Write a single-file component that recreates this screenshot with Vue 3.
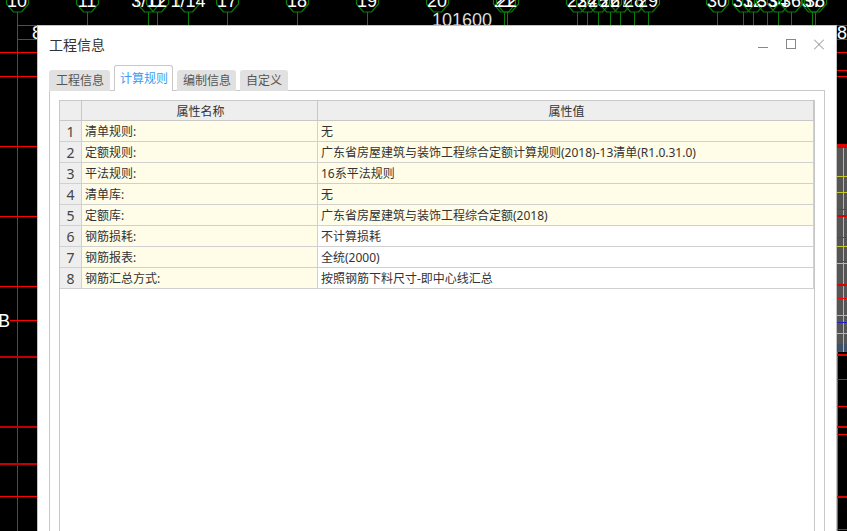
<script setup>
import { ref } from 'vue'

const activeTab = ref('计算规则')
const tabs = ['工程信息', '计算规则', '编制信息', '自定义']

const rows = [
  { name: '清单规则:', value: '无', tinted: true },
  { name: '定额规则:', value: '广东省房屋建筑与装饰工程综合定额计算规则(2018)-13清单(R1.0.31.0)', tinted: true },
  { name: '平法规则:', value: '16系平法规则', tinted: true },
  { name: '清单库:', value: '无', tinted: true },
  { name: '定额库:', value: '广东省房屋建筑与装饰工程综合定额(2018)', tinted: true },
  { name: '钢筋损耗:', value: '不计算损耗', tinted: false },
  { name: '钢筋报表:', value: '全统(2000)', tinted: false },
  { name: '钢筋汇总方式:', value: '按照钢筋下料尺寸-即中心线汇总', tinted: false }
]

// axis bubbles along the top of the drawing
const axes = [
  { x: 17, label: '10' }, { x: 87, label: '11' },
  { x: 148, label: '3/11' }, { x: 157, label: '12' }, { x: 188, label: '1/14' },
  { x: 227, label: '17' }, { x: 297, label: '18' }, { x: 367, label: '19' }, { x: 437, label: '20' },
  { x: 504, label: '21' }, { x: 507, label: '22' },
  { x: 577, label: '23' }, { x: 587, label: '24' }, { x: 598, label: '25' }, { x: 610, label: '26' },
  { x: 620, label: '27' }, { x: 634, label: '28' }, { x: 648, label: '29' },
  { x: 717, label: '30' }, { x: 743, label: '31' }, { x: 753, label: '32' }, { x: 767, label: '33' },
  { x: 778, label: '34' }, { x: 791, label: '36' }, { x: 812, label: '37' }, { x: 815, label: '38' }
]

const bubble = (x) => {
  const c = x + 0.5
  return `${c - 11},-4 ${c - 11},4 ${c - 4},12 ${c + 4},12 ${c + 11},4 ${c + 11},-4`
}

const leftReds = [52, 76, 146, 216, 286, 320, 496]
const leftThick = [357, 427, 464]
const rightReds = [52, 70, 76, 209, 237, 261, 298, 379, 406, 434, 529]
const rightThick = [216, 285, 355, 427, 497]
const rightYellow = [176, 192, 246, 263, 315, 333]
</script>

<template>
  <div class="screen">
    <svg class="drawing" width="847" height="531" viewBox="0 0 847 531">
      <rect x="837" y="145" width="10" height="207" fill="#555" />
      <rect x="837" y="344" width="10" height="7" fill="#3d5068" />
      <g v-for="a in axes" :key="a.x">
        <polygon :points="bubble(a.x)" fill="none" stroke="#0a7d0a" stroke-width="1.2" />
        <line class="crisp" :x1="a.x + 0.5" y1="12" :x2="a.x + 0.5" y2="25" stroke="#0a7d0a" />
        <text :x="a.x" y="7" text-anchor="middle" class="axis-label">{{ a.label }}</text>
      </g>
      <text x="462" y="26" text-anchor="middle" class="dim-label">101600</text>

      <path class="crisp" d="M17.5 12V52M17 25.5H37M17 39.5H37" stroke="#0a7d0a" fill="none" />
      <text x="32" y="39" class="axis-label">8</text>
      <line class="crisp" x1="17.5" y1="52" x2="17.5" y2="531" stroke="#ff0000" />
      <line v-for="y in leftReds" :key="y" class="crisp" x1="0" :y1="y + 0.5" x2="37" :y2="y + 0.5" stroke="#ff0000" />
      <line v-for="y in leftThick" :key="'lt' + y" class="crisp" x1="0" :y1="y" x2="37" :y2="y" stroke="#c00000" stroke-width="2" />
      <circle cx="-5" cy="321" r="7" fill="none" stroke="#0a7d0a" stroke-width="1.4" />
      <rect x="2" y="314" width="8" height="14" fill="#000" />
      <text x="-2" y="327" class="axis-label">B</text>

      <path class="crisp" d="M837 25.5H847M837 39.5H847" stroke="#0a7d0a" fill="none" />
      <text x="837" y="39" class="axis-label">85</text>
      <line class="crisp" x1="843.5" y1="145" x2="843.5" y2="352" stroke="#8fd08f" />
      <line class="crisp" x1="837.5" y1="352" x2="837.5" y2="531" stroke="#3f8f3f" />
      <line class="crisp" x1="837" y1="144.5" x2="847" y2="144.5" stroke="#2020d0" />
      <line class="crisp" x1="837" y1="322.5" x2="847" y2="322.5" stroke="#2020d0" />
      <line v-for="y in rightYellow" :key="'y' + y" class="crisp" x1="837" :y1="y + 0.5" x2="847" :y2="y + 0.5" stroke="#c8c820" />
      <line v-for="y in rightReds" :key="'r' + y" class="crisp" x1="837" :y1="y + 0.5" x2="847" :y2="y + 0.5" stroke="#ff0000" />
      <line v-for="y in rightThick" :key="'t' + y" class="crisp" x1="837" :y1="y" x2="847" :y2="y" stroke="#e00000" stroke-width="2" />
      <rect x="837" y="144" width="10" height="4" fill="#e00000" />
    </svg>

    <section class="dialog">
      <header class="dialog-head">
        <h1 class="dialog-title">工程信息</h1>
        <div class="win-buttons">
          <svg width="10" height="11" viewBox="0 0 10 11"><path d="M0 8.5H10" stroke="#888" fill="none" /></svg>
          <svg width="10" height="11" viewBox="0 0 10 11"><rect x="0.5" y="0.5" width="9" height="9" stroke="#888" fill="none" /></svg>
          <svg width="10" height="11" viewBox="0 0 10 11"><path d="M0 0.5L10 10.5M10 0.5L0 10.5" stroke="#888" fill="none" /></svg>
        </div>
      </header>

      <nav class="tabs">
        <button
          v-for="t in tabs"
          :key="t"
          class="tab"
          :class="{ active: t === activeTab }"
          @click="activeTab = t"
        >{{ t }}</button>
      </nav>

      <div class="panel">
        <div class="grid-wrap">
          <table class="grid">
            <colgroup>
              <col class="col-idx" />
              <col class="col-name" />
              <col />
            </colgroup>
            <thead>
              <tr>
                <th></th>
                <th class="head-cell">属性名称</th>
                <th class="head-cell">属性值</th>
              </tr>
            </thead>
            <tbody>
              <tr v-for="(r, i) in rows" :key="r.name">
                <td class="idx">{{ i + 1 }}</td>
                <td class="tinted">{{ r.name }}</td>
                <td :class="{ tinted: r.tinted }">{{ r.value }}</td>
              </tr>
            </tbody>
          </table>
        </div>
      </div>
    </section>
  </div>
</template>

<style scoped>
.screen {
  position: relative;
  width: 847px;
  height: 531px;
  overflow: hidden;
  background: #000;
  font-family: "Noto Sans", "Noto Sans CJK SC", "Liberation Sans", sans-serif;
  color: #333;
}

.drawing {
  position: absolute;
  left: 0;
  top: 0;
}

.crisp {
  shape-rendering: crispEdges;
}

.axis-label {
  font-family: "Liberation Sans", sans-serif;
  font-size: 18px;
  fill: #fff;
}

.dim-label {
  font-family: "Liberation Sans", sans-serif;
  font-size: 18px;
  fill: #ddd;
}

.dialog {
  position: absolute;
  left: 37px;
  top: 25px;
  width: 800px;
  height: 530px;
  box-sizing: border-box;
  display: flex;
  flex-direction: column;
  padding: 0 11px;
  background: #fff;
  border: 1px solid #c4c4c4;
}

.dialog-head {
  display: flex;
  align-items: flex-start;
  justify-content: space-between;
  height: 39px;
  flex: none;
}

.dialog-title {
  margin: 9px 0 0;
  font-size: 14px;
  font-weight: 400;
  line-height: 20px;
  color: #333;
}

.win-buttons {
  display: flex;
  gap: 18px;
  margin: 13px 1px 0 0;
}

.tabs {
  display: flex;
  align-items: flex-end;
  gap: 4px;
  height: 26px;
  flex: none;
  position: relative;
  z-index: 1;
  margin-bottom: -1px;
}

.tab {
  height: 21px;
  padding: 0 6px;
  border: 0;
  border-radius: 3px 3px 0 0;
  background: #e1e1e1;
  color: #555;
  font: inherit;
  font-size: 12px;
  line-height: 20px;
}

.tab:first-child {
  padding: 0 6px 0 7px;
}

.tab:nth-child(3) {
  padding: 0 5px 0 6px;
}

.tab.active {
  height: 26px;
  padding: 0 4px 0 5px;
  background: #fff;
  color: #3d9bf0;
  border: 1px solid #c8c8c8;
  border-bottom: 0;
}

.panel {
  flex: 1;
  display: flex;
  padding: 9px;
  border: 1px solid #c8c8c8;
}

.grid-wrap {
  flex: 1;
  border: 1px solid #c8c8c8;
  border-bottom: 0;
}

.grid {
  width: 754px;
  table-layout: fixed;
  border-collapse: separate;
  border-spacing: 0;
  font-size: 12px;
}

.col-idx {
  width: 22px;
}

.col-name {
  width: 236px;
}

.grid th,
.grid td {
  box-sizing: border-box;
  padding: 2px 3px 0;
  border-right: 1px solid #d0d0d0;
  border-bottom: 1px solid #d0d0d0;
  font-weight: 400;
  white-space: nowrap;
  overflow: hidden;
  color: #333;
}

.grid th {
  height: 20px;
  background: #eee;
  text-align: center;
  line-height: 17px;
  border-color: #c8c8c8;
}

.grid .head-cell {
  padding-left: 5px;
}

.grid td {
  height: 21px;
  line-height: 18px;
}

.grid .idx {
  padding: 1px 0 0;
  line-height: 19px;
  background: #eee;
  text-align: center;
  font-size: 14px;
  color: #444;
}

.grid .tinted {
  background: #fffde8;
}
</style>
